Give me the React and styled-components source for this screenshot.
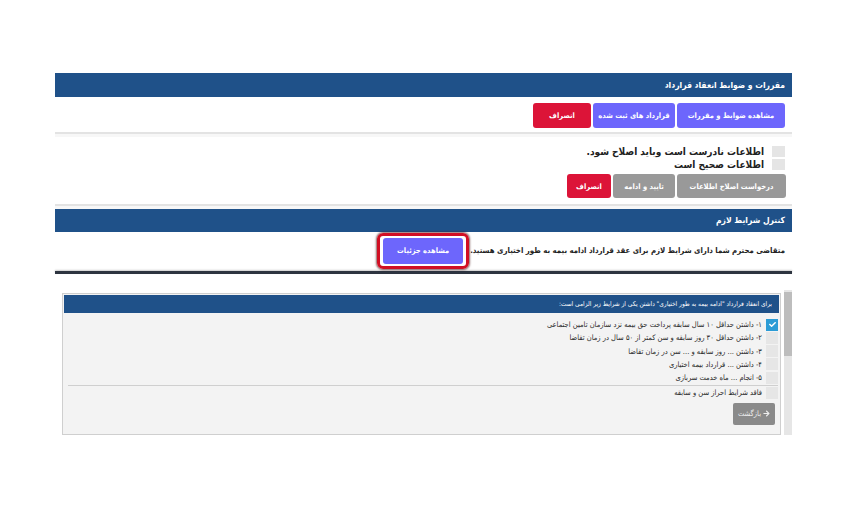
import React from "react";
import styled, { createGlobalStyle } from "styled-components";
import { FaArrowRight, FaCheck } from "react-icons/fa";

const Global = createGlobalStyle`
  html, body { margin: 0; padding: 0; background: #fff; }
  body { font-family: "DejaVu Sans Condensed", "DejaVu Sans", sans-serif; }
  * { box-sizing: border-box; }
`;

const Page = styled.div`
  width: 737px;
  margin: 73px 0 0 55px;
  direction: rtl;
`;

const Header = styled.div`
  height: ${(p) => p.$h || 24}px;
  background: #1f5189;
  color: #fff;
  font-size: ${(p) => p.$fs || 8.5}px;
  font-weight: ${(p) => (p.$light ? "normal" : "bold")};
  line-height: ${(p) => p.$h || 24}px;
  padding-right: 7px;
  white-space: nowrap;
`;

const ButtonRow = styled.div`
  display: flex;
  gap: 2px;
  padding: ${(p) => p.$pad || "6px 7px 4px"};
`;

const Btn = styled.button`
  font-family: inherit;
  width: ${(p) => p.$w}px;
  height: ${(p) => p.$h || 25}px;
  padding: 0;
  border: none;
  border-radius: 3px;
  color: #fff;
  font-size: 7.5px;
  font-weight: bold;
  white-space: nowrap;
  background: ${(p) =>
    p.$variant === "red" ? "#dc1438" : p.$variant === "gray" ? "#999999" : "#6d66fc"};
`;

const Divider = styled.div`
  border-top: 2px solid #e3e3e3;
  height: 5px;
  background: #f7f7f7;
`;

const CheckBlock = styled.div`
  padding: 9px 7px 3px;
  display: flex;
  flex-direction: column;
  gap: 2px;
`;

const CheckRow = styled.label`
  display: flex;
  align-items: center;
  gap: 8px;
  font-size: 10px;
  font-weight: bold;
  color: #222;
  height: 11px;
`;

const GrayBox = styled.span`
  width: 13px;
  height: 11px;
  background: #e5e5e5;
  flex: none;
`;

const InfoRow = styled.div`
  display: flex;
  align-items: center;
  gap: 1px;
  padding: 0 7px 2px;
  height: 39px;
  font-size: 7.8px;
  font-weight: bold;
  color: #222;
  white-space: nowrap;
`;

const Ring = styled.div`
  border: 3px solid #d10f24;
  border-radius: 6px;
  padding: 2px 3px;
  box-shadow: 0 0 2px 1px rgba(60, 0, 0, 0.6);
`;

const DarkLine = styled.div`
  height: 3px;
  background: #2d3440;
  box-shadow: 0 -1px 2px #ccc;
`;

const Lower = styled.div`
  display: flex;
  gap: 3px;
  margin-top: 16px;
  height: 145px;
`;

const ScrollTrack = styled.div`
  width: 8px;
  background: #e6e6e6;
  flex: none;
  display: flex;
  flex-direction: column;
`;

const ScrollThumb = styled.div`
  height: 64px;
  margin-top: 2px;
  background: #bdbdbd;
`;

const Panel = styled.div`
  width: 719px;
  margin-top: 3px;
  height: 142px;
  border: 1px solid #cfcfcf;
  background: #f3f3f3;
  padding: 1px 1px 0;
`;

const List = styled.div`
  display: flex;
  flex-direction: column;
  padding: 5px 1px 0 0;
`;

const Item = styled.div`
  display: flex;
  align-items: center;
  gap: 4px;
  height: 13.25px;
  font-size: 7.5px;
  color: #2a2a2a;
  white-space: nowrap;
`;

const ItemBox = styled.span`
  width: 12px;
  height: 12px;
  flex: none;
  background: ${(p) => (p.$checked ? "#2b9cd6" : "#e6e6e6")};
  display: flex;
  align-items: center;
  justify-content: center;
  color: #fff;
  font-size: 7px;
`;

const Sep = styled.div`
  border-top: 1px solid #cfcfcf;
  margin: 1px 0 0 4px;
`;

const BackWrap = styled.div`
  display: flex;
  padding: 3px 4px 0;
`;

const BackBtn = styled.button`
  font-family: inherit;
  width: 42px;
  height: 22px;
  background: #8a8a8a;
  border: none;
  border-radius: 2px;
  color: #eee;
  font-size: 7.5px;
  display: flex;
  align-items: center;
  justify-content: center;
  gap: 2px;
  padding: 0;
`;

const items = [
  { t: "۱- داشتن حداقل ۱۰ سال سابقه پرداخت حق بیمه نزد سازمان تامین اجتماعی", c: true },
  { t: "۲- داشتن حداقل ۳۰ روز سابقه و سن کمتر از ۵۰ سال در زمان تقاضا" },
  { t: "۳- داشتن ... روز سابقه و ... سن در زمان تقاضا" },
  { t: "۴- داشتن ... قرارداد بیمه اختیاری" },
  { t: "۵- انجام ... ماه خدمت سربازی" },
];

export default function App() {
  return (
    <>
      <Global />
      <Page>
        <Header>مقررات و ضوابط انعقاد قرارداد</Header>
        <ButtonRow>
          <Btn $w={108}>مشاهده ضوابط و مقررات</Btn>
          <Btn $w={82}>قرارداد های ثبت شده</Btn>
          <Btn $variant="red" $w={58}>انصراف</Btn>
        </ButtonRow>
        <Divider />
        <CheckBlock>
          <CheckRow>
            <GrayBox />
            اطلاعات نادرست است وباید اصلاح شود.
          </CheckRow>
          <CheckRow>
            <GrayBox />
            اطلاعات صحیح است
          </CheckRow>
        </CheckBlock>
        <ButtonRow $pad="1px 6px 6px">
          <Btn $variant="gray" $h={24} $w={109}>درخواست اصلاح اطلاعات</Btn>
          <Btn $variant="gray" $h={24} $w={62}>تایید و ادامه</Btn>
          <Btn $variant="red" $h={24} $w={44}>انصراف</Btn>
        </ButtonRow>
        <Divider />
        <Header $h={23}>کنترل شرایط لازم</Header>
        <InfoRow>
          متقاضی محترم شما دارای شرایط لازم برای عقد قرارداد ادامه بیمه به طور اختیاری هستید.
          <Ring>
            <Btn $h={26} $w={80}>مشاهده جزئیات</Btn>
          </Ring>
        </InfoRow>
        <DarkLine />
        <Lower>
          <ScrollTrack>
            <ScrollThumb />
          </ScrollTrack>
          <Panel>
            <Header $h={18} $fs={6.5} $light>
              برای انعقاد قرارداد "ادامه بیمه به طور اختیاری" داشتن یکی از شرایط زیر الزامی است:
            </Header>
            <List>
              {items.map((it, i) => (
                <Item key={i}>
                  <ItemBox $checked={it.c}>{it.c && <FaCheck />}</ItemBox>
                  {it.t}
                </Item>
              ))}
              <Sep />
              <Item>
                <ItemBox />
                فاقد شرایط احراز سن و سابقه
              </Item>
            </List>
            <BackWrap>
              <BackBtn>
                <FaArrowRight size={7} />
                بازگشت
              </BackBtn>
            </BackWrap>
          </Panel>
        </Lower>
      </Page>
    </>
  );
}
